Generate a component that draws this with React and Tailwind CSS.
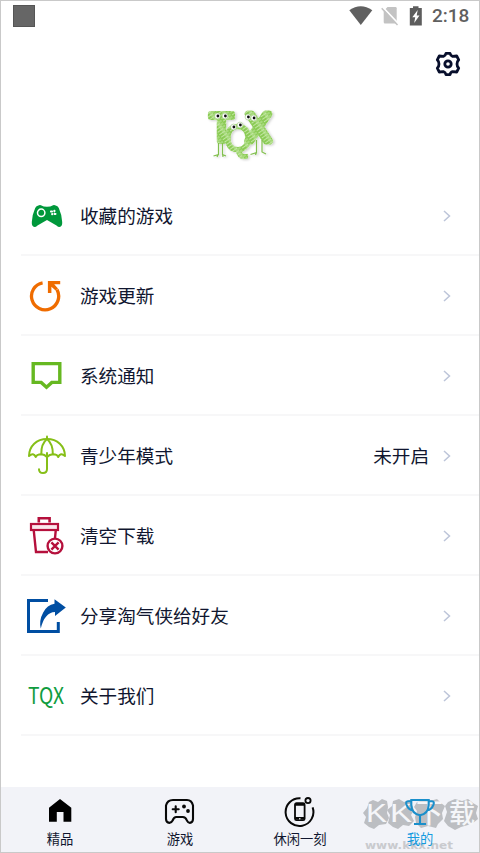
import { Fragment } from "react"

function PadIcon() {
  return (
    <svg width="32" height="24" viewBox="0 0 32 24">
      <path
        d="M8 1.2 Q9.5 .6 11 1.8 Q12 2.7 16 2.7 Q20 2.7 21 1.8 Q22.5 .6 24 1.2 Q27 2 27.8 4 Q30.6 10 31.2 18 Q31.5 22.5 28.5 23 Q27 23 25.5 21.5 L16 16 L6.5 21.5 Q5 23 3.5 23 Q.5 22.5 .8 18 Q1.4 10 4.2 4 Q5 2 8 1.2 Z"
        fill="#00983b"
      />
      <circle cx="10.2" cy="8.8" r="3.7" fill="none" stroke="#fff" strokeWidth="1.5" />
      <g fill="#fff">
        <rect x="19" y="6.5" width="3" height="2" rx=".8" />
        <rect x="22.4" y="5.8" width="2" height="2.6" rx=".8" />
        <rect x="20.2" y="9" width="2" height="2.3" rx=".8" />
        <rect x="22.5" y="8.9" width="3" height="2" rx=".8" />
      </g>
    </svg>
  )
}

function UpdateIcon() {
  return (
    <svg className="mr-0.5" width="34" height="32" viewBox="0 0 34 32" fill="none">
      <path d="M13.6 2.8 A13.6 13.6 0 1 0 28 9.6" stroke="#ef6c00" strokeWidth="3.3" />
      <path d="M18.9 1 H31.2 V4.3 H25.2 L29 8.6 L26.6 10.6 L22.4 6.8 V13 H18.9 Z" fill="#ef6c00" />
    </svg>
  )
}

function NoticeIcon() {
  return (
    <svg width="32" height="30" viewBox="0 0 32 30" fill="none">
      <path d="M2.2 2.6 H28.8 V21.4 H20.8 L15.5 26.2 L10.2 21.4 H2.2 Z" stroke="#66b821" strokeWidth="3.4" />
    </svg>
  )
}

function UmbrellaIcon() {
  return (
    <svg className="mb-0.5" width="40" height="40" viewBox="0 0 40 40" fill="none" stroke="#86bf18" strokeWidth="2" strokeLinecap="round" strokeLinejoin="round">
      <path d="M20 1.4 V4" />
      <path d="M2 21 C2.3 11 9.5 4 20 4 C30.5 4 37.7 11 38 21 Q33.5 17 31.2 22 Q30.5 19.5 26 19.3 Q22.5 19.5 20 22 Q17.5 19.5 14.5 19.3 Q9.5 19.5 8.8 22 Q6.5 17 2 21 Z" />
      <path d="M20 4 Q14 9 14.3 19 M20 4 Q26 9 25.8 19" />
      <path d="M20 18 V34 Q20 38 16 38 Q12 38 12 34.2" />
    </svg>
  )
}

function TrashIcon() {
  return (
    <svg width="36" height="40" viewBox="0 0 36 40" fill="none" stroke="#b5103c" strokeWidth="2.2">
      <path d="M9.8 6.5 V2.2 H20.6 V6.5" strokeWidth="2.6" />
      <rect x="2" y="8" width="27" height="6" fill="#fae6ec" />
      <path d="M4.7 14 L7 36 H19" strokeWidth="2.4" />
      <path d="M26.8 14 L26 22" strokeWidth="2.4" />
      <circle cx="26" cy="30" r="7.4" fill="#fff" strokeWidth="2.4" />
      <path d="M22.4 26.4 L29.6 33.6 M29.6 26.4 L22.4 33.6" strokeWidth="2.4" />
    </svg>
  )
}

function ShareIcon() {
  return (
    <svg className="mr-0.5" width="40" height="36" viewBox="0 0 40 36" fill="none">
      <path d="M22 2.5 H2.5 V33.5 H32.3 V24" stroke="#004ea2" strokeWidth="3" />
      <path d="M28.5 1.2 L39.8 9.6 L29 18 V14 Q18.5 14.5 14.8 30.5 Q12.8 22.5 17.2 14.5 Q21 7 28.5 5.8 Z" fill="#004ea2" />
    </svg>
  )
}

function TqxIcon() {
  return (
    <svg className="overflow-visible" width="44" height="40" viewBox="0 0 44 40">
      <text x="3" y="27.5" textLength="36" lengthAdjust="spacingAndGlyphs" fontSize="23" fill="#109c3e" fontFamily="'Noto Sans CJK SC', sans-serif">
        TQX
      </text>
    </svg>
  )
}

const menu = [
  { icon: <PadIcon />, label: "收藏的游戏" },
  { icon: <UpdateIcon />, label: "游戏更新" },
  { icon: <NoticeIcon />, label: "系统通知" },
  { icon: <UmbrellaIcon />, label: "青少年模式", value: "未开启" },
  { icon: <TrashIcon />, label: "清空下载" },
  { icon: <ShareIcon />, label: "分享淘气侠给好友" },
  { icon: <TqxIcon />, label: "关于我们" },
]

function HomeIcon() {
  return (
    <svg width="32" height="32" viewBox="0 0 32 32">
      <path d="M16 4 L27.3 12.8 V26.7 H19.5 V17 H12.8 V26.7 H5 V12.8 Z" fill="#000" />
    </svg>
  )
}

function GamesIcon() {
  return (
    <svg width="32" height="32" viewBox="0 0 32 32" fill="none" stroke="#080808" strokeWidth="2.1" strokeLinejoin="round" strokeLinecap="round">
      <path d="M9 5 H23 Q27.7 5 29 10.5 V24 Q28.9 27.7 25.8 27.9 Q24.2 27.9 22.9 25.5 Q21.6 22 18.8 22 H12.2 Q10 22 8.6 25.5 Q7.4 27.9 5.4 27.9 Q2.1 27.6 2 24 V10.5 Q3.3 5 9 5 Z" />
      <path d="M11.7 11.2 V17.2 M8.7 14.2 H14.7" />
      <g fill="#080808" stroke="none">
        <circle cx="20" cy="11.5" r="1.9" />
        <circle cx="24" cy="16" r="1.9" />
      </g>
    </svg>
  )
}

function PhoneIcon() {
  return (
    <svg width="32" height="32" viewBox="0 0 32 32" fill="none" stroke="#080808" strokeWidth="1.8">
      <path d="M16.5 3.2 A13.9 13.9 0 1 0 28.6 12.4" strokeWidth="2" />
      <circle cx="24" cy="5.6" r="2.6" />
      <rect x="11" y="8.2" width="9.6" height="17" rx="1.5" />
      <path d="M11 9.5 H20.5 M11 23.3 H20.5" strokeWidth="2.6" />
      <circle cx="15.8" cy="23.7" r=".8" fill="#fff" stroke="none" />
    </svg>
  )
}

function TrophyIcon() {
  return (
    <svg width="32" height="32" viewBox="0 0 32 32" fill="none" stroke="#1a8fcb" strokeWidth="2.1">
      <path d="M7.3 5 H24.7 V10 Q24.3 18.8 16 20.3 Q7.7 18.8 7.3 10 Z" />
      <path d="M7.3 6.2 H4 Q1.3 6.2 2.6 9.8 Q4.5 14.7 8.6 15.3 M24.7 6.2 H28 Q30.7 6.2 29.4 9.8 Q27.5 14.7 23.4 15.3" />
      <path d="M16 20 V28.5 M10 29 H22" />
    </svg>
  )
}

const tabs = [
  { icon: <HomeIcon />, label: "精品" },
  { icon: <GamesIcon />, label: "游戏" },
  { icon: <PhoneIcon />, label: "休闲一刻" },
  { icon: <TrophyIcon />, label: "我的", active: true },
]

function StatusBar() {
  return (
    <div className="flex h-[30px] items-center pr-[11px] pl-3">
      <div className="h-[22px] w-[22px] border border-[#555] bg-[#666]" />
      <div className="flex-1" />
      <svg width="24" height="20" viewBox="0 0 24 20">
        <path d="M.3 4.3 Q11.7 -3.8 23.3 4.3 L11.8 19 Z" fill="#606060" />
      </svg>
      <svg className="ml-2" width="18" height="20" viewBox="0 0 18 20">
        <path d="M6.5 1 H14.5 Q15.7 1 15.7 2.2 V16 Q15.7 17.5 14.2 17.5 H4 Q2.7 17.5 2.7 16 V5 Z" fill="#c3c3c3" />
        <path d="M1.7 1.2 L17.5 17.8" stroke="#fff" strokeWidth="1.7" />
        <path d="M.7 2.3 L16.5 18.9" stroke="#c3c3c3" strokeWidth="1.5" />
      </svg>
      <svg className="ml-[10px]" width="14" height="20" viewBox="0 0 14 20">
        <path d="M4 .3 H9.5 V2 H12.8 V19.5 H.8 V2 H4 Z" fill="#5d5d5d" />
        <path d="M8.7 4 L3.3 11.3 H6.2 L5.2 17 L10.5 9.6 H7.7 Z" fill="#fff" />
      </svg>
      <span className="ml-[9px] w-[36px] whitespace-nowrap font-[Roboto] text-[19px] leading-[20px] font-medium text-[#606060]">2:18</span>
    </div>
  )
}

function SettingsIcon() {
  return (
    <svg width="26" height="26" viewBox="0 0 26 26" fill="none" stroke="#080f2c" strokeWidth="2.8" strokeLinejoin="round">
      <path d="M11 2.3 H15 Q15.5 4.8 17.5 5.3 L21.7 5 L23.7 8.8 Q22 10.7 22 13 Q22 15.3 23.7 17.2 L21.7 21 L17.5 20.7 Q15.5 21.2 15 23.7 H11 Q10.5 21.2 8.5 20.7 L4.3 21 L2.3 17.2 Q4 15.3 4 13 Q4 10.7 2.3 8.8 L4.3 5 L8.5 5.3 Q10.5 4.8 11 2.3 Z" />
      <circle cx="13" cy="13" r="3.2" />
    </svg>
  )
}

const eyes = [
  [22.5, 16],
  [30, 16],
  [38.5, 27],
  [45, 25],
  [53, 17],
  [58.7, 18],
]

// Scribbled monster letters with legs and googly eyes
function Logo() {
  return (
    <svg width="90" height="70" viewBox="0 0 90 70">
      <defs>
        <pattern id="scribble" width="11" height="3" patternUnits="userSpaceOnUse" patternTransform="rotate(-35)">
          <rect width="11" height="3" fill="#8bcb55" />
          <path d="M0 .5 H7 M4 2 H10" stroke="#d0edb6" strokeWidth=".8" />
        </pattern>
        <filter id="soft" x="-20%" y="-20%" width="140%" height="140%">
          <feDropShadow dx="1.5" dy="1" stdDeviation="1" floodColor="#000" floodOpacity=".18" />
        </filter>
      </defs>
      <g filter="url(#soft)">
        <text fill="url(#scribble)" stroke="url(#scribble)" strokeWidth="6" strokeLinejoin="round" fontFamily="'Liberation Sans', sans-serif">
          <tspan x="15" y="41" fontSize="38" textLength="23" lengthAdjust="spacingAndGlyphs">T</tspan>
          <tspan x="29.5" y="51" fontSize="36" strokeWidth="2.6" textLength="27" lengthAdjust="spacingAndGlyphs">Q</tspan>
          <tspan x="51.5" y="41" fontSize="38" strokeWidth="7" textLength="24" lengthAdjust="spacingAndGlyphs">X</tspan>
        </text>
        <g fill="none" stroke="#81bf4d" strokeWidth="1.2">
          <path d="M23.5 43 V54.5 L18.5 56 M27.5 43 V54.5 L31 56 M23.5 54 L22 57 M27.5 54 L28 57" />
          <path d="M61.5 40 V52.5 L55.5 54.5 M67 40 V52 L71 54 M61.5 52.5 L60.5 55" />
        </g>
        {eyes.map(([x, y]) => (
          <Fragment key={x}>
            <circle cx={x} cy={y} r="2.9" fill="#fff" stroke="#77ae50" strokeWidth=".4" />
            <circle cx={x + 0.4} cy={y} r="1.4" fill="#111" />
          </Fragment>
        ))}
      </g>
    </svg>
  )
}

function MenuRow({ icon, label, value }) {
  return (
    <div className="ml-5 flex h-20 items-center border-b-2 border-[#f7f7f8] pr-7">
      <div className="flex w-[52px] shrink-0 justify-center pt-0.5">{icon}</div>
      <span className="ml-[7px] flex-1 text-[18.6px] leading-6">{label}</span>
      {value && <span className="mr-[14px] text-[18.6px] leading-6">{value}</span>}
      <svg className="mt-0.5" width="8" height="12" viewBox="0 0 8 12" fill="none" stroke="#bdc5d9" strokeWidth="1.5">
        <path d="M1 1 L6.5 6 L1 11" />
      </svg>
    </div>
  )
}

function Watermark() {
  return (
    <svg className="pointer-events-none absolute right-0 bottom-0" width="118" height="55" viewBox="0 0 118 55">
      <g fill="#bcbec2">
        <path d="M8 5 L12 3 L17 5 L21 2 L26 4 L27 10 L26 16 L28 21 L25 27 L18 28 L13 32 L8 30 L3 26 L5 20 L2 16 L6 11 Z" />
        <path d="M32 4 L38 2 L43 5 L49 3 L51 8 L53 13 L50 18 L53 24 L48 29 L42 28 L37 32 L32 30 L27 26 L29 18 L26 13 L31 9 Z" />
        <path d="M56 5 L63 3 L69 4 L76 2 L80 6 L84 9 L81 16 L82 22 L77 27 L75 31 L67 29 L60 31 L55 26 L54 20 L56 14 L53 10 Z" />
        <path d="M87 5 L94 2 L101 4 L107 2 L112 6 L117 9 L115 16 L117 22 L112 26 L107 28 L100 30 L94 33 L87 29 L83 24 L86 15 L84 9 Z" />
      </g>
      <g fill="#f5f6f9" fontFamily="'Liberation Sans', 'Noto Sans CJK SC', sans-serif">
        <text x="5" y="25" fontSize="25" textLength="21" lengthAdjust="spacingAndGlyphs">K</text>
        <text x="29" y="25" fontSize="25" textLength="22" lengthAdjust="spacingAndGlyphs">K</text>
        <text x="55" y="26" fontSize="27" fontWeight="500">下</text>
        <text x="88" y="26" fontSize="26" fontWeight="500">载</text>
      </g>
      <text x="4" y="52" fontSize="11" fontWeight="bold" fill="#c9cace" textLength="88" lengthAdjust="spacingAndGlyphs" fontFamily="'DejaVu Sans', sans-serif">
        www.kkx.net
      </text>
    </svg>
  )
}

export default function App() {
  return (
    <div className="flex h-[853px] w-[480px] flex-col overflow-hidden border border-[#c9c9c9] bg-white font-['Noto_Sans_CJK_SC',sans-serif] text-[#10162f]">
      <StatusBar />
      <div className="flex h-[69px] justify-end pt-5 pr-[18px]">
        <SettingsIcon />
      </div>
      <div className="flex h-[76px] pl-[194px]">
        <Logo />
      </div>

      {/* Menu */}
      <div className="flex-1">
        {menu.map((item) => (
          <MenuRow key={item.label} {...item} />
        ))}
      </div>

      {/* Bottom tabs */}
      <div className="relative h-[65px] bg-[#f2f3f8]">
        <Watermark />
        <div className="relative -mx-px grid grid-cols-4">
          {tabs.map((tab) => (
            <div key={tab.label} className="flex flex-col items-center pt-2">
              {tab.icon}
              <span className={`mt-1 text-[13.3px] leading-4 ${tab.active ? "text-[#159bdf]" : ""}`}>{tab.label}</span>
            </div>
          ))}
        </div>
      </div>
    </div>
  )
}
